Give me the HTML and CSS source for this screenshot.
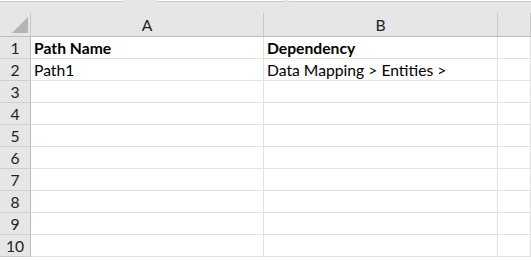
FILE: index.html
```html
<!DOCTYPE html>
<html>
<head>
    <title>Sheet</title>
    <link rel="stylesheet" href="styles.css">
</head>
<body>
    <div class="topbar">
        <div class="tool-box box-one"></div>
        <div class="tool-box box-two"></div>
        <div class="tool-box box-three"></div>
    </div>
    <div class="head-gap"></div>
    <table class="sheet">
        <tr class="col-head">
            <th class="corner"><span class="corner-mark"></span></th>
            <th class="col-a">A</th>
            <th class="col-b">B</th>
            <th class="col-c"></th>
        </tr>
        <tr>
            <th class="row-num">1</th>
            <td class="bold">Path Name</td>
            <td class="bold">Dependency</td>
            <td></td>
        </tr>
        <tr>
            <th class="row-num">2</th>
            <td>Path1</td>
            <td>Data Mapping &gt; Entities &gt;</td>
            <td></td>
        </tr>
        <tr><th class="row-num">3</th><td></td><td></td><td></td></tr>
        <tr><th class="row-num">4</th><td></td><td></td><td></td></tr>
        <tr><th class="row-num">5</th><td></td><td></td><td></td></tr>
        <tr><th class="row-num">6</th><td></td><td></td><td></td></tr>
        <tr><th class="row-num">7</th><td></td><td></td><td></td></tr>
        <tr><th class="row-num">8</th><td></td><td></td><td></td></tr>
        <tr><th class="row-num">9</th><td></td><td></td><td></td></tr>
        <tr><th class="row-num">10</th><td></td><td></td><td></td></tr>
    </table>
</body>
</html>
```

FILE: styles.css
```css
body {
    margin: 0;
    background-color: #ffffff;
    font-family: Lato, "Open Sans", sans-serif;
    overflow: hidden;
}

.topbar {
    display: flex;
    height: 2px;
    background-color: #e6e6e6;
}

.tool-box {
    height: 1px;
    background-color: #ffffff;
    border-bottom: 1px solid #c6c6c6;
}

.box-one {
    width: 122px;
    margin-right: 36px;
}

.box-two {
    width: 126px;
    margin-right: 5px;
}

.box-three {
    flex: 1;
}

.head-gap {
    height: 11px;
    background-color: #e6e6e6;
}

.sheet {
    border-collapse: collapse;
    table-layout: fixed;
    width: 100%;
    font-size: 15.7px;
    color: #000000;
}

.sheet th,
.sheet td {
    padding: 0;
    height: 21px;
    border-right: 1px solid #e1e1e1;
    border-bottom: 1px solid #e1e1e1;
    overflow: hidden;
    white-space: nowrap;
}

.sheet td {
    padding-left: 3px;
    padding-top: 1px;
    height: 20px;
}

.col-head th {
    height: 22px;
    background-color: #e6e6e6;
    font-weight: normal;
    color: #222222;
    border-right: 1px solid #c8c8c8;
    border-bottom: 1px solid #bcbcbc;
    text-align: center;
    padding-top: 1px;
}

.corner {
    width: 30px;
    position: relative;
}

.corner-mark {
    position: absolute;
    right: 2px;
    bottom: 3px;
    width: 0;
    height: 0;
    border-left: 16px solid transparent;
    border-bottom: 16px solid #b4b4b4;
}

.col-a {
    width: 232px;
}

.col-b {
    width: 233px;
}

.row-num {
    background-color: #e6e6e6;
    font-weight: normal;
    color: #222222;
    text-align: center;
    border-right: 1px solid #bcbcbc !important;
    border-bottom: 1px solid #cfcfcf !important;
}

.bold {
    font-weight: bold;
}
```
